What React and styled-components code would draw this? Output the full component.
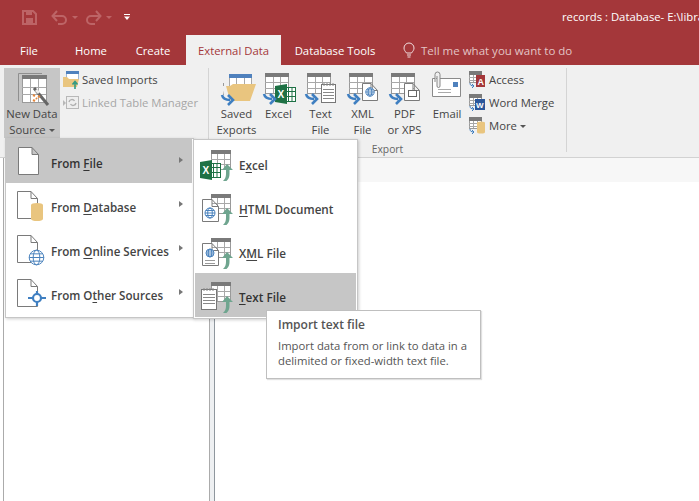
import React from "react";
import styled, { createGlobalStyle } from "styled-components";

const Global = createGlobalStyle`
  html, body { margin: 0; padding: 0; background: #fff; }
  body { font-family: "Open Sans", "Noto Sans", "Liberation Sans", sans-serif; }
  #root { width: 699px; height: 501px; overflow: hidden; }
`;
const Page = styled.div`position: relative; width: 699px; height: 501px; overflow: hidden; background: #fff; font-size: 11.3px; color: #444;`;
const TitleBar = styled.div`height: 35px; background: #a4373a; display: flex; align-items: center; justify-content: space-between; padding-left: 21px;`;
const Qat = styled.div`display: flex; align-items: center; gap: 7px; margin-top: -1px;`;
const QatWide = styled.div`margin-right: ${p => p.$mr}px;`;
const TitleText = styled.div`color: #fff; font-size: 11.3px; white-space: nowrap; width: 137px; overflow: hidden; margin-top: -3px;`;
const TabRow = styled.div`height: 30px; background: #a4373a; display: flex; align-items: stretch;`;
const Tab = styled.div`
  width: ${p => p.$w}px; display: flex; align-items: center; justify-content: center; font-size: 11.3px; box-sizing: border-box;
  padding-right: ${p => p.$pr || 0}px;
  color: ${p => (p.$active ? "#a4373a" : "#fff")}; background: ${p => (p.$active ? "#f0f0f0" : "transparent")};
`;
const Tell = styled.div`display: flex; align-items: center; gap: 6px; color: #e3c4c5; font-size: 11.5px; margin-left: 14px;`;
const Ribbon = styled.div`height: 93px; box-sizing: border-box; background: #f0f0f0; border-bottom: 1px solid #d2d2d2; display: flex; padding: 3px 0 0 4px; align-items: flex-start;`;
const Group = styled.div`height: 84px; display: flex; align-items: flex-start; flex: none; width: ${p => p.$w}px; position: relative; padding-left: ${p => p.$pl || 0}px; box-sizing: border-box;`;
const Sep = styled.div`width: 1px; height: 84px; background: #d4d4d4; flex: none;`;
const Big = styled.div`
  width: ${p => p.$w}px; height: 70px; flex: none; display: flex; flex-direction: column; align-items: center; box-sizing: border-box; padding-top: 5px;
  background: ${p => (p.$on ? "#c6c6c6" : "transparent")};
`;
const IconBox = styled.div`height: 33px; display: flex; align-items: flex-start; justify-content: center;`;
const BigLabel = styled.div`font-size: 11.3px; line-height: 16px; text-align: center; white-space: pre-line; color: #444;`;
const Small = styled.div`display: flex; flex-direction: column; flex: none; margin-left: ${p => p.$ml}px;`;
const SmallRow = styled.div`height: 23px; display: flex; align-items: center; gap: 3px; white-space: nowrap; font-size: 11.3px; color: ${p => (p.$off ? "#a6a6a6" : "#444")};`;
const GroupLabel = styled.div`position: absolute; left: 0; right: 0; top: 74px; text-align: center; font-size: 10.3px; color: #666;`;
const Caret = styled.span`display: inline-block; width: 0; height: 0; border-left: 3px solid transparent; border-right: 3px solid transparent; border-top: 3px solid #555; margin-left: 3px; vertical-align: middle;`;
const Body = styled.div`height: 343px; display: flex;`;
const NavPane = styled.div`width: 205px; margin-left: 3px; border-left: 1px solid #ababab; border-right: 1px solid #ababab; flex: none;`;
const Splitter = styled.div`width: 4px; background: #eef0f2; border-right: 1px solid #8f979e; flex: none;`;
const Work = styled.div`flex: 1; display: flex; flex-direction: column;`;
const Strip = styled.div`height: 24px; background: #f7f7f7;`;
const Menu = styled.div`
  position: absolute; background: #fff; border: 1px solid #c6c6c6; box-shadow: 1px 1px 3px rgba(0,0,0,.2); box-sizing: border-box;
  display: flex; flex-direction: column;
`;
const MainMenu = styled(Menu)`left: 5px; top: 138px; width: 189px; height: 180px; padding: 0 1px 1px 0;`;
const SubMenu = styled(Menu)`left: 193px; top: 139px; width: 165px; height: 180px; padding: 1px;`;
const Item = styled.div`
  height: 44px; flex: none; display: flex; align-items: center; position: relative; font-size: ${p => p.$fs}px; font-weight: 600; color: #444;
  background: ${p => (p.$on ? "#c6c6c6" : "transparent")}; ${p => p.$on && "color:#333;"}
`;
const ItemIcon = styled.div`width: ${p => p.$w}px; flex: none; display: flex; justify-content: flex-start; align-items: center; padding-left: ${p => p.$pl}px; box-sizing: border-box;`;
const ItemLabel = styled.span`margin-top: ${p => p.$mt}px; white-space: pre;`;
const Arrow = styled.span`position: absolute; right: 9px; top: 18px; width: 0; height: 0; border-top: 3.5px solid transparent; border-bottom: 3.5px solid transparent; border-left: 4px solid #777;`;
const U = styled.span`text-decoration: underline; text-underline-offset: 2px;`;
const Tip = styled.div`position: absolute; left: 266px; top: 310px; width: 215px; height: 69px; box-sizing: border-box; background: #fff; border: 1px solid #bfbfbf; box-shadow: 1px 1px 1px rgba(0,0,0,.12); padding: 6px 11px; color: #555; font-size: 11.3px; line-height: 15px;`;
const TipTitle = styled.div`font-weight: 600; font-size: 12px; margin-bottom: 6px; line-height: 15px;`;

const Grid = ({ x = 0, y = 0, w = 24, h = 22, head = "#7a7a7a" }) => (
  <g transform={`translate(${x} ${y})`}>
    <rect x=".5" y=".5" width={w} height={h} fill="#fff" stroke="#9a9a9a" />
    <rect x="0" y="0" width={w + 1} height="4" fill={head} />
    {[1, 2].map(i => <path key={i} d={`M${Math.round((i * w) / 3) + .5} 4V${h}`} stroke="#a8a8a8" />)}
    {[1, 2].map(i => <path key={i} d={`M0 ${Math.round(4 + (i * (h - 4)) / 3) + .5}H${w}`} stroke="#a8a8a8" />)}
  </g>
);
const BlueArrow = ({ x = 0, y = 0 }) => (
  <path transform={`translate(${x} ${y})`} d="M1 1c1 4 4 5 8 5M7 1l5 5-5 5" fill="none" stroke="#3f7fc1" strokeWidth="2.6" />
);
const Up = ({ x = 0, y = 0 }) => (
  <path transform={`translate(${x} ${y})`} d="M6 0l6 6H8.500v4c0 3-1 5-3 7H2c2-2 3-4 3-7V6H1z" fill="#6fa58f" />
);
const Svg = ({ w, h, children }) => <svg width={w} height={h} viewBox={`0 0 ${w} ${h}`} style={{ display: "block", overflow: "visible" }}>{children}</svg>;
const Doc = ({ x = 0, y = 0, w = 20, h = 27, fill = "#fff" }) => (
  <path transform={`translate(${x} ${y})`} d={`M.5 .5H${w - 7}L${w - .5} 7.500V${h - .5}H.5z M${w - 7} .5V7.500H${w - .5}`} fill={fill} stroke="#7a7a7a" />
);
const Globe = ({ x, y, r = 6.5 }) => (
  <g fill="none" stroke="#4a82bd" strokeWidth="1">
    <circle cx={x} cy={y} r={r} fill="#fff" />
    <ellipse cx={x} cy={y} rx={r / 2.2} ry={r} />
    <path d={`M${x - r} ${y}H${x + r}M${x - r + 1} ${y - r / 2}H${x + r - 1}M${x - r + 1} ${y + r / 2}H${x + r - 1}`} />
  </g>
);
const XlBadge = ({ x = 0, y = 0 }) => (
  <g transform={`translate(${x} ${y})`}>
    <rect x="6.500" y="3.500" width="14" height="14" fill="#fff" stroke="#1e7145" />
    <path d="M13.500 3v14M17 3v14M6 7.500h14M6 12.500h14" stroke="#1e7145" />
    <path d="M0 2L12 0V20L0 18z" fill="#1e7145" />
    <text x="2.500" y="14" fontSize="10" fontWeight="700" fill="#fff" fontFamily="Liberation Sans">X</text>
  </g>
);
const Notepad = ({ x = 0, y = 0, w = 15, h = 18 }) => (
  <g transform={`translate(${x} ${y})`}>
    <rect x=".5" y="1.500" width={w} height={h} fill="#fff" stroke="#777" />
    <path d={`M3 0v3M6 0v3M9 0v3M12 0v3M2 6.500H${w - 1}M2 9.500H${w - 1}M2 12.500H${w - 1}M2 15.500H${w - 1}`} stroke="#888" />
  </g>
);

const NewData = () => (
  <Svg w={34} h={33}>
    <path d="M3.500 28V.5H27" fill="none" stroke="#8f8f8f" />
    <Grid x={7} y={2} w={24} h={27} />
    <path d="M19 15l14 17" stroke="#666" strokeWidth="3" />
    <path d="M21 17l3 3" stroke="#eee" strokeWidth="3" />
    <path d="M18 22l2 1M23 23l2 1M18 27l2 1M21 25l1 1" stroke="#e5873d" strokeWidth="2" />
  </Svg>
);
const SavedImp = () => (
  <Svg w={16} h={18}>
    <rect x="3.500" y=".5" width="12" height="8" fill="#fff" stroke="#9cb7d6" />
    <rect x="3" y="0" width="13" height="3" fill="#4f81bd" />
    <path d="M0 6h4l2 2h10l-2 8H0z" fill="#e9c57f" />
    <path d="M12 18v-6M9.500 13.500l2.500-3 2.500 3" stroke="#2f9a84" strokeWidth="1.600" fill="none" />
  </Svg>
);
const Linked = () => (
  <Svg w={16} h={16}>
    <rect x="3.500" y="1.500" width="12" height="12" fill="#eee" stroke="#b8b8b8" />
    <path d="M6 7a3 3 0 0 1 5.500-1M13 8a3 3 0 0 1-5.500 1" stroke="#b0b0b0" fill="none" strokeWidth="1.400" />
    <path d="M0 5l3 3-3 3z" fill="#b8b8b8" />
  </Svg>
);
const SavedExp = () => (
  <Svg w={38} h={33}>
    <rect x="11.500" y="1.500" width="22" height="12" fill="#fff" stroke="#a8a8a8" />
    <rect x="11" y="1" width="23" height="4" fill="#4f81bd" />
    <path d="M18.500 5v9M26.500 5v9" stroke="#a8a8a8" />
    <path d="M5.500 10v12" stroke="#999" />
    <path d="M6 13h6l3-2h23l-6 17H13z" fill="#e9c57f" />
    <path d="M4 13h4l4 14H7z" fill="#f0f0f0" />
    <BlueArrow x={3} y={21} />
  </Svg>
);
const ExportDoc = ({ kind }) => (
  <Svg w={34} h={33}>
    <Grid x={3} y={0} w={23} h={20} />
    {kind === "excel" && <XlBadge x={13} y={11} />}
    {kind === "text" && <Notepad x={17} y={10} w={14} h={18} />}
    {kind === "xml" && <g><Doc x={16} y={10} w={16} h={18} /><Globe x={24} y={19} r={4.200} /></g>}
    {kind === "pdf" && <g><Doc x={16} y={10} w={16} h={18} /><rect x="20.500" y="17.500" width="8" height="6" fill="#fff" stroke="#666" /></g>}
    <BlueArrow x={1} y={20} />
  </Svg>
);
const Email = () => (
  <Svg w={30} h={33}>
    <g transform="translate(-1 -2)">
      <path d="M1.500 7.500H29.500V25.500H1.500z" fill="#fff" stroke="#8a8a8a" />
      <rect x="22" y="11" width="5" height="5" fill="#4f81bd" />
      <path d="M7 18.500H20M7 21.500H20" stroke="#aaa" />
      <path d="M4 11V3.500a2.500 2.500 0 0 1 5 0V15a1.500 1.500 0 0 1-3 0V5" fill="#f0f0f0" stroke="#888" />
    </g>
  </Svg>
);
const SmallTbl = ({ children }) => (
  <Svg w={17} h={17}>
    <Grid x={0} y={0} w={12} h={11} />
    <path d="M1 12c0 2 1 3 4 3M3 13l2 2-2 2" stroke="#3f7fc1" fill="none" />
    {children}
  </Svg>
);

const iconFile = (
  <Svg w={24} h={30}>
    <Doc x={2} y={1} w={21} h={28} />
  </Svg>
);
const iconDb = (
  <Svg w={30} h={34}>
    <Doc x={1} y={3} w={21} h={28} />
    <path d="M15 17a6 2 0 0 1 12 0V31a6 2 0 0 1-12 0z" fill="#e9c57f" />
  </Svg>
);
const iconOnline = (
  <Svg w={30} h={34}>
    <Doc x={1} y={3} w={21} h={28} />
    <Globe x={20.500} y={25.500} r={7.300} />
  </Svg>
);
const iconOther = (
  <Svg w={30} h={34}>
    <Doc x={1} y={3} w={21} h={28} />
    <circle cx="21" cy="22" r="4" fill="#fff" stroke="#3f7fc1" strokeWidth="2.200" />
    <path d="M21 15v3M21 26v4M12 22h5M25 22h5" stroke="#3f7fc1" strokeWidth="2.200" />
  </Svg>
);
const base = <Grid x={11} y={5} w={19} h={19} />;
const iconImpExcel = (
  <Svg w={36} h={36}>{base}<XlBadge x={0} y={15} /><Up x={21} y={19} /></Svg>
);
const iconImpHtml = (
  <Svg w={36} h={36}>{base}<Doc x={2} y={10} w={17} h={23} /><Globe x={10} y={24} r={5} /><Up x={21} y={19} /></Svg>
);
const iconImpXml = (
  <Svg w={36} h={36}>{base}<Doc x={2} y={10} w={17} h={23} /><Globe x={10} y={20} r={4} /><path d="M5 27.500H15M5 30.500H15" stroke="#999" /><Up x={21} y={19} /></Svg>
);
const iconImpText = (
  <Svg w={36} h={36}>{base}<Notepad x={1} y={11} w={15} h={20} /><Up x={21} y={19} /></Svg>
);

const MainItem = ({ on, icon, children }) => (
  <Item $on={on} $fs={11.6}>
    <ItemIcon $w={45} $pl={10}>{icon}</ItemIcon>
    <ItemLabel $mt={4}>{children}</ItemLabel>
    <Arrow />
  </Item>
);
const SubItem = ({ on, icon, children }) => (
  <Item $on={on} $fs={11.7}>
    <ItemIcon $w={44} $pl={5}>{icon}</ItemIcon>
    <ItemLabel $mt={3}>{children}</ItemLabel>
  </Item>
);

export default function App() {
  return (
    <Page>
      <Global />
      <TitleBar>
        <Qat>
          <QatWide $mr={7}>
            <Svg w={16} h={16}>
              <path d="M2 2H12L15 5V15H2z" fill="none" stroke="#bd6466" strokeWidth="2" />
              <path d="M5 2H11V6H5zM5 9H12V14H5z" fill="#bd6466" />
            </Svg>
          </QatWide>
          <Svg w={28} h={14}>
            <path d="M2 6h9a4 4 0 0 1 0 8H7M6 1L1.500 6 6 11" fill="none" stroke="#bd6466" strokeWidth="2" />
            <path d="M21 6h6l-3 3z" fill="#bd6466" />
          </Svg>
          <QatWide $mr={2}>
            <Svg w={28} h={14}>
              <path d="M14 6H5a4 4 0 0 0 0 8h4M10 1l4.500 5L10 11" fill="none" stroke="#bd6466" strokeWidth="2" />
              <path d="M20 6h6l-3 3z" fill="#bd6466" />
            </Svg>
          </QatWide>
          <Svg w={8} h={8}>
            <path d="M1 1.500H7" stroke="#fff" />
            <path d="M1 3.500H7L4 7z" fill="#fff" />
          </Svg>
        </Qat>
        <TitleText>records : Database- E:\library\records.accdb</TitleText>
      </TitleBar>
      <TabRow>
        <Tab $w={58}>File</Tab>
        <Tab $w={66}>Home</Tab>
        <Tab $w={62} $pr={4}>Create</Tab>
        <Tab $w={95} $active>External Data</Tab>
        <Tab $w={108}>Database Tools</Tab>
        <Tell>
          <Svg w={12} h={16}>
            <path d="M3.500 11C2 9 1 8 1 6a5 5 0 0 1 10 0c0 2-1 3-2.500 5zM4 13H8M4.500 15H7.500" fill="none" stroke="#f1dfe0" />
          </Svg>
          Tell me what you want to do
        </Tell>
      </TabRow>
      <Ribbon>
        <Group $w={204}>
          <Big $w={56} $on>
            <IconBox><NewData /></IconBox>
            <BigLabel>{"New Data\nSource"}<Caret /></BigLabel>
          </Big>
          <Small $ml={3}>
            <SmallRow><SavedImp />Saved Imports</SmallRow>
            <SmallRow $off><Linked />Linked Table Manager</SmallRow>
          </Small>
        </Group>
        <Sep />
        <Group $w={357} $pl={3}>
          <Big $w={49}><IconBox><SavedExp /></IconBox><BigLabel>{"Saved\nExports"}</BigLabel></Big>
          <Big $w={35}><IconBox><ExportDoc kind="excel" /></IconBox><BigLabel>Excel</BigLabel></Big>
          <Big $w={49}><IconBox><ExportDoc kind="text" /></IconBox><BigLabel>{"Text\nFile"}</BigLabel></Big>
          <Big $w={35}><IconBox><ExportDoc kind="xml" /></IconBox><BigLabel>{"XML\nFile"}</BigLabel></Big>
          <Big $w={49}><IconBox><ExportDoc kind="pdf" /></IconBox><BigLabel>{"PDF\nor XPS"}</BigLabel></Big>
          <Big $w={36}><IconBox><Email /></IconBox><BigLabel>Email</BigLabel></Big>
          <Small $ml={4}>
            <SmallRow><SmallTbl><rect x="7" y="4" width="9" height="12" fill="#a4373a" /><text x="8.500" y="14" fontSize="9" fontWeight="700" fill="#fff" fontFamily="Liberation Sans">A</text></SmallTbl>Access</SmallRow>
            <SmallRow><SmallTbl><rect x="6" y="5" width="10" height="11" fill="#2b579a" /><text x="7" y="14" fontSize="8" fontWeight="700" fill="#fff" fontFamily="Liberation Sans">W</text></SmallTbl>Word Merge</SmallRow>
            <SmallRow><SmallTbl><path d="M8 6a4 1.500 0 0 1 8 0V15a4 1.500 0 0 1-8 0z" fill="#e9c57f" /></SmallTbl><span>More<Caret /></span></SmallRow>
          </Small>
          <GroupLabel>Export</GroupLabel>
        </Group>
        <Sep />
      </Ribbon>
      <Body>
        <NavPane />
        <Splitter />
        <Work><Strip /></Work>
      </Body>
      <MainMenu>
        <MainItem on icon={iconFile}>From <U>F</U>ile</MainItem>
        <MainItem icon={iconDb}>From <U>D</U>atabase</MainItem>
        <MainItem icon={iconOnline}>From <U>O</U>nline Services</MainItem>
        <MainItem icon={iconOther}>From O<U>t</U>her Sources</MainItem>
      </MainMenu>
      <SubMenu>
        <SubItem icon={iconImpExcel}>E<U>x</U>cel</SubItem>
        <SubItem icon={iconImpHtml}><U>H</U>TML Document</SubItem>
        <SubItem icon={iconImpXml}>X<U>M</U>L File</SubItem>
        <SubItem on icon={iconImpText}><U>T</U>ext File</SubItem>
      </SubMenu>
      <Tip>
        <TipTitle>Import text file</TipTitle>
        Import data from or link to data in a<br />delimited or fixed-width text file.
      </Tip>
    </Page>
  );
}
